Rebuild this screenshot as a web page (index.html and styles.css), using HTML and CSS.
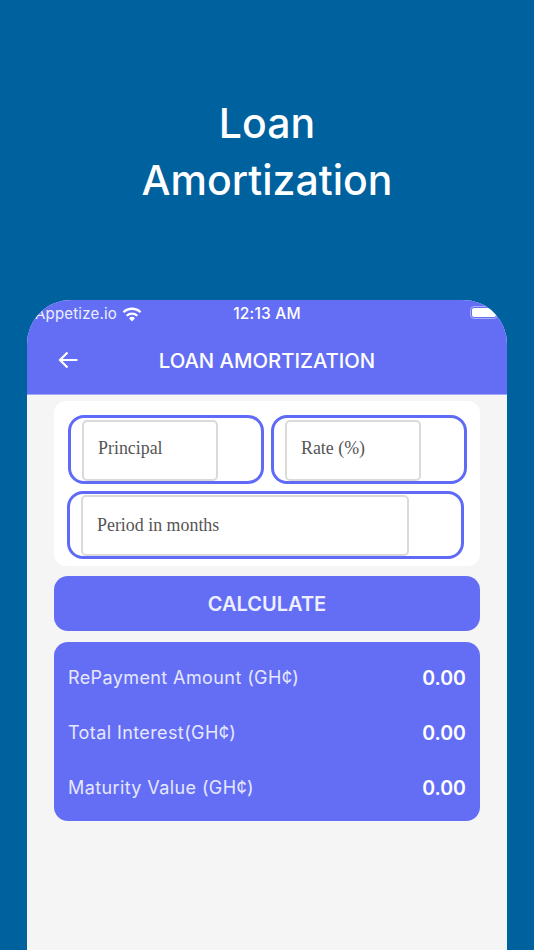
FILE: index.html
```html
<!DOCTYPE html>
<html lang="en">
<head>
<meta charset="utf-8">
<title>Loan Amortization</title>
<link rel="stylesheet" href="styles.css">
</head>
<body>
<main class="page">
  <h1 class="headline">Loan<br>Amortization</h1>
  <section class="phone">
    <header class="appbar">
      <div class="status">
        <div class="status-left">
          <span class="carrier">Appetize.io</span>
          <svg class="wifi" viewBox="0 0 20 15" width="20" height="15" aria-hidden="true">
            <path d="M10 14.6 7 11.2a4.3 4.3 0 0 1 6 0z" fill="#fff"/>
            <path d="M4.7 8.7a7.6 7.6 0 0 1 10.6 0" fill="none" stroke="#fff" stroke-width="2.3"/>
            <path d="M1.5 5.2a12.2 12.2 0 0 1 17 0" fill="none" stroke="#fff" stroke-width="2.3"/>
          </svg>
        </div>
        <span class="clock">12:13 AM</span>
        <span class="battery"><span class="battery-fill"></span></span>
      </div>
      <div class="titlebar">
        <svg class="back" viewBox="0 0 20 18" width="20" height="18" aria-hidden="true">
          <path d="M19.5 9H2M9.5 1.5 2 9l7.500 7.500" fill="none" stroke="#fff" stroke-width="2.200"/>
        </svg>
        <h2 class="title">LOAN AMORTIZATION</h2>
      </div>
    </header>
    <div class="content">
      <form class="card">
        <div class="row">
          <div class="field"><input class="input" placeholder="Principal"></div>
          <div class="field"><input class="input" placeholder="Rate (%)"></div>
        </div>
        <div class="field field-wide"><input class="input input-wide" placeholder="Period in months"></div>
      </form>
      <button class="calc" type="button">CALCULATE</button>
      <div class="results">
        <div class="result"><span class="label">RePayment Amount (GH¢)</span><span class="value">0.00</span></div>
        <div class="result"><span class="label">Total Interest(GH¢)</span><span class="value">0.00</span></div>
        <div class="result"><span class="label">Maturity Value (GH¢)</span><span class="value">0.00</span></div>
      </div>
    </div>
  </section>
</main>
</body>
</html>
```
FILE: styles.css
```css
* { box-sizing: border-box; }
html, body { margin: 0; height: 100%; overflow: hidden; }
body { background: #00619f; font-family: Inter, "Liberation Sans", sans-serif; color: #fff; }
.page { height: 950px; display: flex; flex-direction: column; padding: 0 27px; }
.headline {
  height: 300px; margin: 0; padding-top: 95px;
  font: 500 41px/57px Inter, sans-serif; text-align: center; color: #fff;
}
.phone {
  flex: 1; display: flex; flex-direction: column;
  background: #f5f5f5; border-radius: 44px 44px 0 0; overflow: hidden;
}
.appbar { height: 95px; background: #646ef5; border-bottom: 1px solid #a3a9f7; flex: none; }
.status { height: 27px; position: relative; display: flex; align-items: flex-end; justify-content: center; font-size: 15px; line-height: 20px; }
.status-left { position: absolute; left: 8px; top: 4px; display: flex; align-items: center; gap: 5px; }
.carrier { color: #eef; letter-spacing: 0.2px; }
.wifi { display: block; }
.clock { position: relative; top: -3px; font-size: 15.500px; font-weight: 500; letter-spacing: 0.2px; }
.battery { position: absolute; left: 443px; top: 6px; width: 28px; height: 13px; border: 1px solid #a9aefa; border-radius: 4px; padding: 1px; }
.battery-fill { display: block; height: 100%; background: #fff; border-radius: 2px; }
.titlebar { height: 67px; position: relative; display: flex; align-items: center; justify-content: center; }
.back { position: absolute; left: 31px; top: 24px; }
.title { margin: 0; font-size: 20.300px; font-weight: 500; line-height: 24px; color: #fff; }
.content { padding: 6px 27px 0; display: flex; flex-direction: column; }
.card { background: #fff; border-radius: 12px; height: 165px; padding: 14px 13px 0 14px; }
.row { display: flex; gap: 7px; }
.field { width: 196px; height: 69px; border: 3px solid #5f6af6; border-radius: 16px; padding: 2px 11px; background: #fff; }
.field-wide { width: 397px; height: 68px; margin: 7px 0 0 -1px; padding: 1px 11px; }
.input {
  display: block; width: 136px; height: 61px; padding: 0 14px 4px;
  border: 2px solid #dadada; border-radius: 5px; background: #fff; outline: none;
  font: 17.900px "Liberation Serif", serif;
}
.input-wide { width: 328px; padding-bottom: 0; }
.input::placeholder { color: #555; opacity: 1; }
.calc {
  display: block; width: 426px; height: 55px; margin: 10px 0 0; padding: 1px 0 0;
  background: #646ef5; border: 0; border-radius: 14px; color: #eef0ff;
  font: 600 20px Inter, sans-serif;
}
.results { height: 179px; margin-top: 11px; padding: 8px 14px 0; background: #646ef5; border-radius: 14px; }
.result { height: 55px; display: flex; align-items: center; justify-content: space-between; }
.label { font-size: 18px; letter-spacing: 0.4px; color: #e6e8ff; }
.value { font-size: 19.500px; font-weight: 600; color: #fff; }
```
